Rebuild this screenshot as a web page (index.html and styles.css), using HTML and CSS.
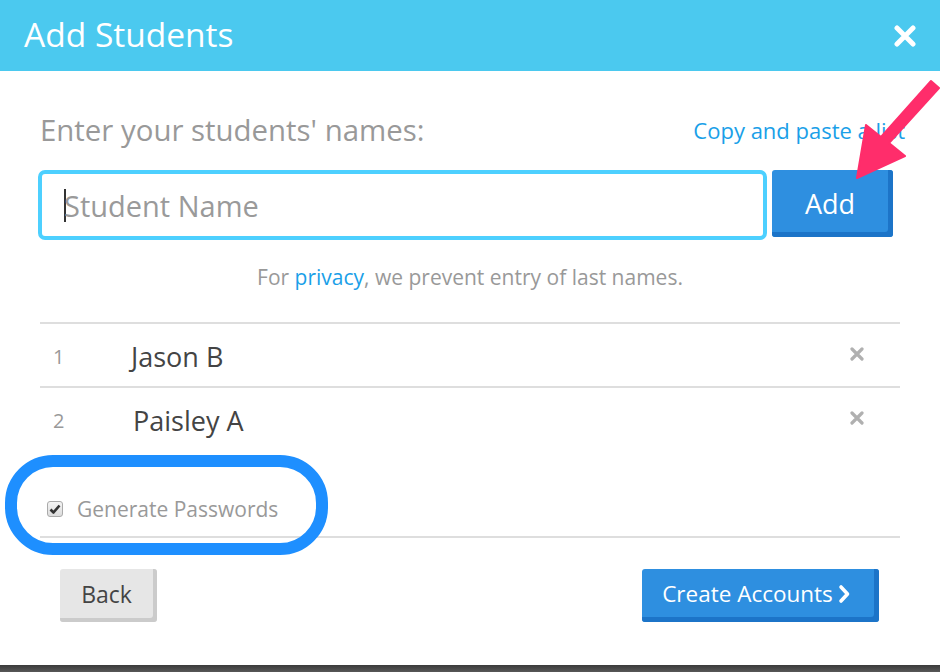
FILE: index.html
```html
<!DOCTYPE html>
<html>
<head>
<meta charset="utf-8">
<link rel="stylesheet" href="styles.css">
</head>
<body>
<div class="page">
  <header class="modal-header">
    <h1 class="title">Add Students</h1>
    <svg class="close" width="22" height="22" viewBox="0 0 22 22"><path d="M3 3L19 19M19 3L3 19" stroke="#fff" stroke-width="5" stroke-linecap="round"/></svg>
  </header>
  <main class="modal-body">
    <div class="prompt-row">
      <span class="prompt">Enter your students' names:</span>
      <a class="link paste">Copy and paste a list</a>
    </div>
    <div class="entry-row">
      <div class="name-input"><span class="caret"></span><span class="placeholder">Student Name</span></div>
      <button class="btn btn-primary btn-add">Add</button>
    </div>
    <p class="privacy">For <a class="link">privacy</a>, we prevent entry of last names.</p>
    <ul class="student-list">
      <li class="student"><span class="num">1</span><span class="name">Jason B</span><svg class="remove" width="14" height="14" viewBox="0 0 14 14"><path d="M2 2L12 12M12 2L2 12" stroke="#b0b0b0" stroke-width="3.2" stroke-linecap="round"/></svg></li>
      <li class="student"><span class="num">2</span><span class="name name-2">Paisley A</span><svg class="remove" width="14" height="14" viewBox="0 0 14 14"><path d="M2 2L12 12M12 2L2 12" stroke="#b0b0b0" stroke-width="3.2" stroke-linecap="round"/></svg></li>
    </ul>
    <div class="options">
      <label class="check-label"><span class="checkbox"><svg width="12" height="12" viewBox="0 0 12 12"><path d="M1.5 6.5L4.5 9.5L10.5 2.5" stroke="#333" stroke-width="2.6" fill="none" stroke-linejoin="round"/></svg></span>Generate Passwords</label>
    </div>
    <div class="actions">
      <button class="btn btn-default">Back</button>
      <button class="btn btn-primary btn-create">Create Accounts<svg width="14" height="22" viewBox="0 0 14 22"><path d="M4 4L10.5 11L4 18" stroke="#fff" stroke-width="3.6" fill="none" stroke-linecap="round" stroke-linejoin="round"/></svg></button>
    </div>
  </main>
  <div class="bottom-bar"></div>
  <div class="highlight"></div>
  <svg class="pointer" width="940" height="672" viewBox="0 0 940 672"><polygon points="857,178 866,125 881,137 931,81 939,88 889,143 905,156" fill="#ff2d6b" stroke="#ff2d6b" stroke-width="2" stroke-linejoin="round"/></svg>
</div>
</body>
</html>
```
FILE: styles.css
```css
* { box-sizing: border-box; }
html, body { margin: 0; padding: 0; }
body {
  width: 940px;
  height: 672px;
  overflow: hidden;
  background: #fff;
  font-family: "Open Sans", "Noto Sans", sans-serif;
}
.page {
  position: relative;
  width: 940px;
  height: 672px;
  display: flex;
  flex-direction: column;
  overflow: hidden;
}
.modal-header {
  height: 71px;
  flex: none;
  background: #4bc9ef;
  display: flex;
  align-items: center;
  justify-content: space-between;
  padding: 0 24px 0 24px;
}
.title {
  margin: 0 0 4px 0;
  color: #fff;
  font-weight: 400;
  font-size: 33.5px;
  line-height: 40px;
}
.close { margin-top: 1px; }
.modal-body {
  flex: 1;
  padding: 0 40px;
  display: flex;
  flex-direction: column;
}
.prompt-row {
  display: flex;
  align-items: center;
  justify-content: space-between;
  margin-top: 42px;
  height: 34px;
  line-height: 34px;
  white-space: nowrap;
}
.prompt {
  font-size: 29.4px;
  color: #999;
}
.link { color: #1a9fe8; text-decoration: none; }
.paste { font-size: 22px; margin-right: -5px; margin-top: 0; }
.entry-row {
  display: flex;
  align-items: flex-start;
  margin-top: 23px;
  margin-left: -2px;
  gap: 5px;
}
.name-input {
  width: 729px;
  height: 70px;
  border: 4px solid #4dd0ff;
  border-radius: 7px;
  display: flex;
  align-items: center;
  padding-left: 22px;
  font-size: 29px;
  color: #9a9a9a;
}
.caret {
  display: inline-block;
  width: 2px;
  height: 33px;
  background: #333;
  margin-right: -2px;
}
.btn {
  font-family: "Open Sans", "Noto Sans", sans-serif;
  border: none;
  border-radius: 3px;
  cursor: pointer;
  display: flex;
  align-items: center;
  justify-content: center;
}
.btn-primary {
  background: #2e8fe0;
  color: #fff;
  box-shadow: inset -5px -5px 0 #1c74c8;
}
.btn-add {
  width: 121px;
  height: 67px;
  font-size: 27px;
  padding: 0 5px 0 0;
}
.privacy {
  margin: 24px 0 0 0;
  text-align: center;
  font-size: 21px;
  color: #999;
  line-height: 26px;
}
.student-list {
  list-style: none;
  margin: 32px 0 0 0;
  padding: 0;
}
.student {
  height: 64px;
  border-top: 2px solid #dedede;
  display: flex;
  align-items: center;
  padding-top: 2px;
}
.num {
  width: 91px;
  padding-left: 13px;
  font-size: 20px;
  color: #999;
}
.name {
  flex: 1;
  font-size: 27px;
  color: #444;
}
.name-2 { padding-left: 2px; padding-top: 0; }
.remove { margin-right: 36px; margin-top: -4px; }
.options {
  height: 88px;
  border-bottom: 2px solid #dedede;
  display: flex;
  align-items: center;
  padding-left: 7px;
  padding-top: 32px;
}
.check-label {
  display: flex;
  align-items: center;
  font-size: 21px;
  color: #999;
}
.checkbox {
  width: 16px;
  height: 16px;
  border: 1px solid #aaa;
  border-radius: 3px;
  background: linear-gradient(#f4f4f4, #dcdcdc);
  display: flex;
  align-items: center;
  justify-content: center;
  margin-right: 14px;
}
.actions {
  display: flex;
  justify-content: space-between;
  padding: 0 21px 0 20px;
  margin-top: 31px;
}
.btn-default {
  width: 97px;
  height: 53px;
  background: #e6e6e6;
  color: #444;
  font-size: 23px;
  box-shadow: inset -4px -4px 0 #cbcbcb;
  padding: 0 4px 3px 0;
}
.btn-create {
  width: 237px;
  height: 53px;
  font-size: 22.5px;
  gap: 4px;
  padding: 0 8px 4px 0;
}
.bottom-bar {
  position: absolute;
  left: 0;
  right: 0;
  bottom: 0;
  height: 7px;
  background: linear-gradient(#3a3a3a, #575757);
}
.highlight {
  position: absolute;
  left: 5px;
  top: 455px;
  width: 323px;
  height: 100px;
  border: 12px solid #1e8fff;
  border-radius: 48px;
}
.pointer {
  position: absolute;
  left: 0;
  top: 0;
  pointer-events: none;
}
```
